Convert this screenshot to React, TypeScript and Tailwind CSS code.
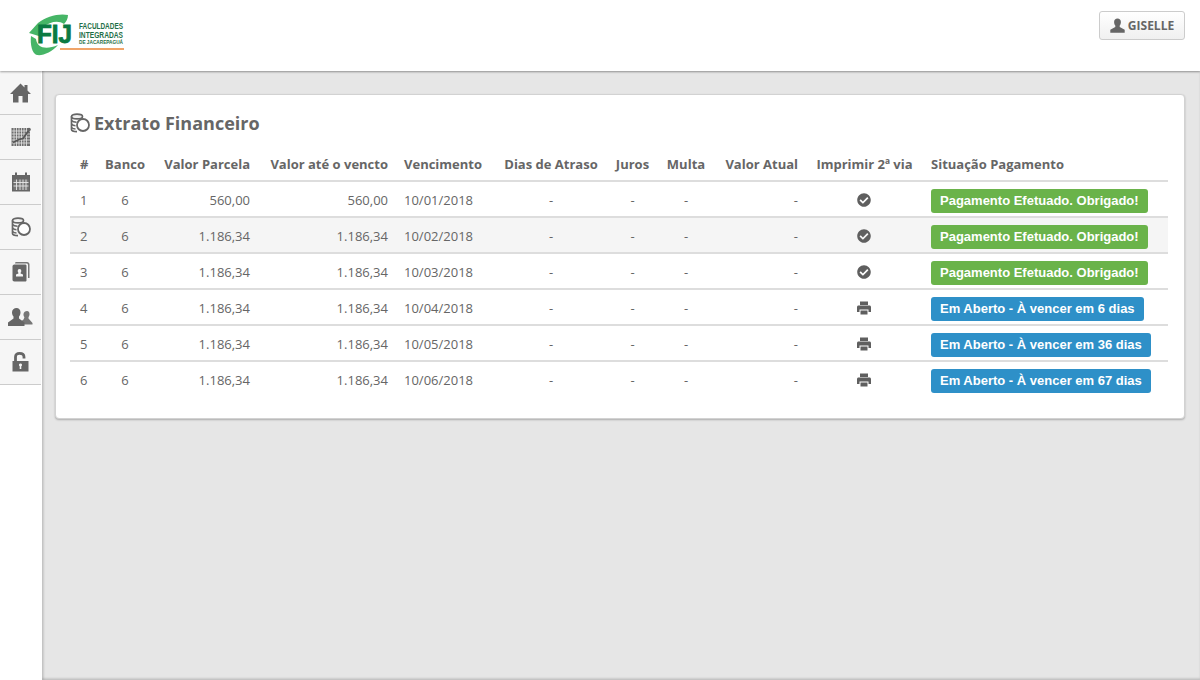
import { FaCheckCircle } from "react-icons/fa";

const rows = [
  { n: 1, parcela: "560,00", ate: "560,00", venc: "10/01/2018", paid: true, status: "Pagamento Efetuado. Obrigado!" },
  { n: 2, parcela: "1.186,34", ate: "1.186,34", venc: "10/02/2018", paid: true, status: "Pagamento Efetuado. Obrigado!" },
  { n: 3, parcela: "1.186,34", ate: "1.186,34", venc: "10/03/2018", paid: true, status: "Pagamento Efetuado. Obrigado!" },
  { n: 4, parcela: "1.186,34", ate: "1.186,34", venc: "10/04/2018", paid: false, status: "Em Aberto - À vencer em 6 dias" },
  { n: 5, parcela: "1.186,34", ate: "1.186,34", venc: "10/05/2018", paid: false, status: "Em Aberto - À vencer em 36 dias" },
  { n: 6, parcela: "1.186,34", ate: "1.186,34", venc: "10/06/2018", paid: false, status: "Em Aberto - À vencer em 67 dias" },
];

function HomeIcon() {
  return (
    <svg width="21" height="20" viewBox="0 0 21 20" fill="#666">
      <path d="M10.5 0.500 L14.5 4.500 V2 H17.500 V7.500 L21 11 H18 V19.500 H12.5 V13 H8.5 V19.500 H3 V11 H0 Z" />
    </svg>
  );
}

function ChartIcon() {
  return (
    <svg width="20" height="20" viewBox="0 0 20 20">
      <rect x="0.5" y="1" width="18.500" height="18" fill="#6e6e6e" />
      <path d="M3 1v18M5.500 1v18M8 1v18M10.500 1v18M13 1v18M15.500 1v18M0.500 4H19M0.500 7H19M0.500 10H19M0.500 13H19M0.500 16H19" stroke="#e4e4e4" strokeWidth="0.8" />
      <path d="M2 15.500 L8 12.500 L12 11.500 L18 3" stroke="#555" strokeWidth="1.800" fill="none" />
      <circle cx="18" cy="2.500" r="1.800" fill="#666" />
    </svg>
  );
}

function CalendarIcon() {
  return (
    <svg width="18" height="20" viewBox="0 0 18 20">
      <path d="M0 3h3V0.500h2V3h8V0.500h2V3h3v16.500H0z" fill="#666" />
      <path d="M1.500 7.500h15v10.500h-15z" fill="#777" />
      <path d="M4.500 7.500v10.500M8 7.500v10.500M11 7.500v10.500M14 7.500v10.500M1.500 10.500h15M1.500 14h15" stroke="#e8e8e8" strokeWidth="0.9" />
    </svg>
  );
}

function CoinsIcon({ size = 20 }: { size?: number }) {
  return (
    <svg width={size} height={size} viewBox="0 0 20 20" fill="none" stroke="#666">
      <ellipse cx="7" cy="3.500" rx="5.500" ry="2.400" strokeWidth="1.700" fill="#f0f0f0" />
      <path d="M1.500 3.500v13c0 1 2 2.200 5.500 2.200" strokeWidth="1.700" />
      <path d="M1.500 7.500c1 1.300 3 1.700 5 1.700M1.500 11c1 1.300 3 1.700 4 1.700M1.500 14.500c1 1 3 1.500 4 1.500" strokeWidth="1.500" />
      <circle cx="13" cy="12" r="6" fill="#fff" strokeWidth="1.800" />
    </svg>
  );
}

function ContactIcon() {
  return (
    <svg width="18" height="20" viewBox="0 0 18 20">
      <path d="M3.500 0H15c1.500 0 2.500 1 2.500 2.500V16h-1.500V3c0-.8-.5-1.500-1.500-1.500H3z" fill="#777" />
      <path d="M2.500 2.500H13c1 0 1.500.5 1.500 1.500v14c0 1-.5 1.500-1.500 1.500H2.500C1 19.500 0.500 18.500 0.500 17.500V4.500C0.500 3.500 1 2.500 2.500 2.500z" fill="#666" />
      <path d="M7.500 7a1.800 1.800 0 0 1 1.800 2c0 .8-.3 1.400-.7 1.800v.8l2.400 1V14.500H4v-1.900l2.400-1v-.8c-.4-.4-.7-1-.7-1.800a1.800 1.800 0 0 1 1.800-2z" fill="#f5f5f5" />
    </svg>
  );
}

function UsersIcon() {
  return (
    <svg width="25" height="19" viewBox="0 0 25 19" fill="#666">
      <path d="M19 3c1.500 0 2.500 1.200 2.500 3 0 1.300-.4 2.500-1 3.200v1.300l4 4.500v1.500h-8.500l-3-3 2.500-2 .8-1.800v-.8C15.500 8 15.500 7 15.500 6c.2-1.800 1.900-3 3.500-3z" fill="#777" />
      <path d="M8.500 0c2.400 0 4 1.800 4 4.300 0 1.800-.6 3.300-1.500 4.300v1.900l5.500 4v3.500H0v-3.500l5.500-4V8.600C4.600 7.600 4 6.100 4 4.300 4 1.800 6.100 0 8.500 0z" />
    </svg>
  );
}

function UnlockIcon() {
  return (
    <svg width="17" height="20" viewBox="0 0 17 20">
      <path d="M3.500 9.500V5C3.500 2.500 5 1.400 7.500 1.400s4.500 1.100 4.500 3.600v1.500" fill="none" stroke="#666" strokeWidth="2.800" />
      <path d="M0.500 9h16v10.500h-16z" fill="#666" />
      <path d="M8.500 11.500a1.500 1.500 0 0 1 .8 2.800V17H7.700v-2.700A1.500 1.500 0 0 1 8.500 11.500z" fill="#f5f5f5" />
    </svg>
  );
}

function UserIcon() {
  return (
    <svg width="15" height="15" viewBox="0 0 15 15" fill="#666">
      <path d="M7.500 0.500c2.100 0 3.400 1.500 3.400 3.500 0 1.500-.5 2.800-1.200 3.600v1.500l5 2.600v3H0.300v-3l5-2.600V7.600C4.600 6.800 4.100 5.500 4.100 4c0-2 1.300-3.500 3.400-3.500z" />
    </svg>
  );
}

function PrintIcon() {
  return (
    <svg width="14" height="14" viewBox="0 0 14 14" fill="#5f5f5f">
      <path d="M3 0.500h8v3.500H3z" />
      <path d="M1.500 4.500h11c.8 0 1.500.7 1.500 1.500v5h-2.500V8.500h-9V11H0V6c0-.8.700-1.500 1.500-1.500z" />
      <path d="M3.500 9.500h7v4h-7z" />
    </svg>
  );
}

function Logo() {
  return (
    <svg width="130" height="46" viewBox="0 0 130 46">
      <path d="M1 21 L10 11 C18 4 32 1 40 3 C40 7 38 10 36 12 C30 8 22 10 15 15 L14 25 Z" fill="#46b566" />
      <path d="M3 24 L8 27 C9 36 18 38 30 33 C24 40 15 44 9 43 C4 42 2 32 3 24 Z" fill="#46b566" />
      <text x="9" y="31" fontFamily="Liberation Sans, sans-serif" fontWeight="700" fontSize="25" textLength="35" lengthAdjust="spacingAndGlyphs" fill="#0b7a42" stroke="#0b7a42" strokeWidth="0.8">
        FIJ
      </text>
      <g fontFamily="Liberation Sans, sans-serif" fontWeight="700" fill="#1f6f48">
        <text x="51" y="17" fontSize="8.500" textLength="44" lengthAdjust="spacingAndGlyphs">FACULDADES</text>
        <text x="51" y="26" fontSize="8.500" textLength="44" lengthAdjust="spacingAndGlyphs">INTEGRADAS</text>
        <text x="51" y="31.500" fontSize="5.500" textLength="44" lengthAdjust="spacingAndGlyphs">DE JACAREPAGUÁ</text>
      </g>
      <rect x="32" y="36" width="64" height="2" fill="#f0a468" />
    </svg>
  );
}

const navIcons = [
  <HomeIcon key="home" />,
  <ChartIcon key="chart" />,
  <CalendarIcon key="cal" />,
  <CoinsIcon key="coins" />,
  <ContactIcon key="contact" />,
  <UsersIcon key="users" />,
  <UnlockIcon key="lock" />,
];

export default function App() {
  return (
    <div className="flex h-[680px] w-[1200px] flex-col overflow-hidden bg-white font-['Open_Sans',sans-serif] text-[13px] text-[#666]">
      <header className="relative z-10 flex h-[71px] shrink-0 items-start justify-between bg-white pt-[11px] pr-[15px] pl-[28px] shadow-[0_1px_2px_rgba(0,0,0,0.35)]">
        <div className="mt-[1px]">
          <Logo />
        </div>
        <button className="flex h-[29px] w-[86px] items-center justify-center gap-[3px] rounded-[3px] border border-[#ccc] bg-gradient-to-b from-white to-[#f0f0f0] text-[12px] font-bold text-[#666]">
          <UserIcon />
          GISELLE
        </button>
      </header>

      <div className="flex min-h-0 flex-1">
        <nav className="w-[42px] shrink-0 bg-white">
          <ul className="w-[41px]">
            {navIcons.map((icon, i) => (
              <li key={i} className="flex h-[45px] items-center justify-center border-b border-[#ccc] bg-[#f6f6f6] first:h-[44px]">
                {icon}
              </li>
            ))}
          </ul>
        </nav>

        <main className="flex-1 bg-[#e6e6e6] pt-[23px] pr-[15px] pl-[13px] shadow-[inset_2px_0_2px_rgba(0,0,0,0.12),inset_0_-2px_2px_rgba(0,0,0,0.12)]">
          <section className="h-[325px] rounded-[4px] border border-[#d2d2d2] bg-white pt-[15px] pr-[14px] pl-[14px] shadow-[0_1px_2px_rgba(0,0,0,0.25)]">
            <h1 className="flex h-[26px] items-center gap-[4px] text-[18px] font-bold text-[#666]">
              <CoinsIcon />
              Extrato Financeiro
            </h1>
            <table className="mt-[8px] w-[1098px] table-fixed border-separate border-spacing-0">
              <colgroup>
                <col className="w-[27px]" />
                <col className="w-[56px]" />
                <col className="w-[105px]" />
                <col className="w-[138px]" />
                <col className="w-[101px]" />
                <col className="w-[108px]" />
                <col className="w-[55px]" />
                <col className="w-[52px]" />
                <col className="w-[94px]" />
                <col className="w-[117px]" />
                <col className="w-[245px]" />
              </colgroup>
              <thead>
                <tr className="h-[36px] font-bold whitespace-nowrap [&>th]:pt-[6px]">
                  <th className="pl-[10px] text-left">#</th>
                  <th className="text-center">Banco</th>
                  <th className="px-2 text-right">Valor Parcela</th>
                  <th className="px-2 text-right">Valor até o vencto</th>
                  <th className="px-2 text-left">Vencimento</th>
                  <th className="text-center">Dias de Atraso</th>
                  <th className="text-center">Juros</th>
                  <th className="text-center">Multa</th>
                  <th className="px-2 text-right">Valor Atual</th>
                  <th className="text-center">Imprimir 2ª via</th>
                  <th className="px-2 text-left">Situação Pagamento</th>
                </tr>
              </thead>
              <tbody>
                {rows.map((row) => (
                  <tr key={row.n} className={`h-[36px] [&>td]:border-t-2 [&>td]:border-[#ddd] [&>td]:pt-[4px] ${row.n === 2 ? "bg-[#f5f5f5]" : ""}`}>
                    <td className="pl-[10px]">{row.n}</td>
                    <td className="text-center">6</td>
                    <td className="px-2 text-right">{row.parcela}</td>
                    <td className="px-2 text-right">{row.ate}</td>
                    <td className="px-2">{row.venc}</td>
                    <td className="text-center">-</td>
                    <td className="text-center">-</td>
                    <td className="text-center">-</td>
                    <td className="px-2 text-right">-</td>
                    <td>
                      <div className="-mt-[2px] flex justify-center pr-[2px]">
                        {row.paid ? <FaCheckCircle size={14} color="#5f5f5f" /> : <PrintIcon />}
                      </div>
                    </td>
                    <td className="px-2">
                      <span className={`inline-block h-[24px] rounded-[3px] px-[9px] align-middle font-['Liberation_Sans',sans-serif] text-[13px] leading-[23px] font-bold whitespace-nowrap text-white ${row.paid ? "bg-[#6ab34a]" : "bg-[#2e90c8]"}`}>
                        {row.status}
                      </span>
                    </td>
                  </tr>
                ))}
              </tbody>
            </table>
          </section>
        </main>
      </div>
    </div>
  );
}
